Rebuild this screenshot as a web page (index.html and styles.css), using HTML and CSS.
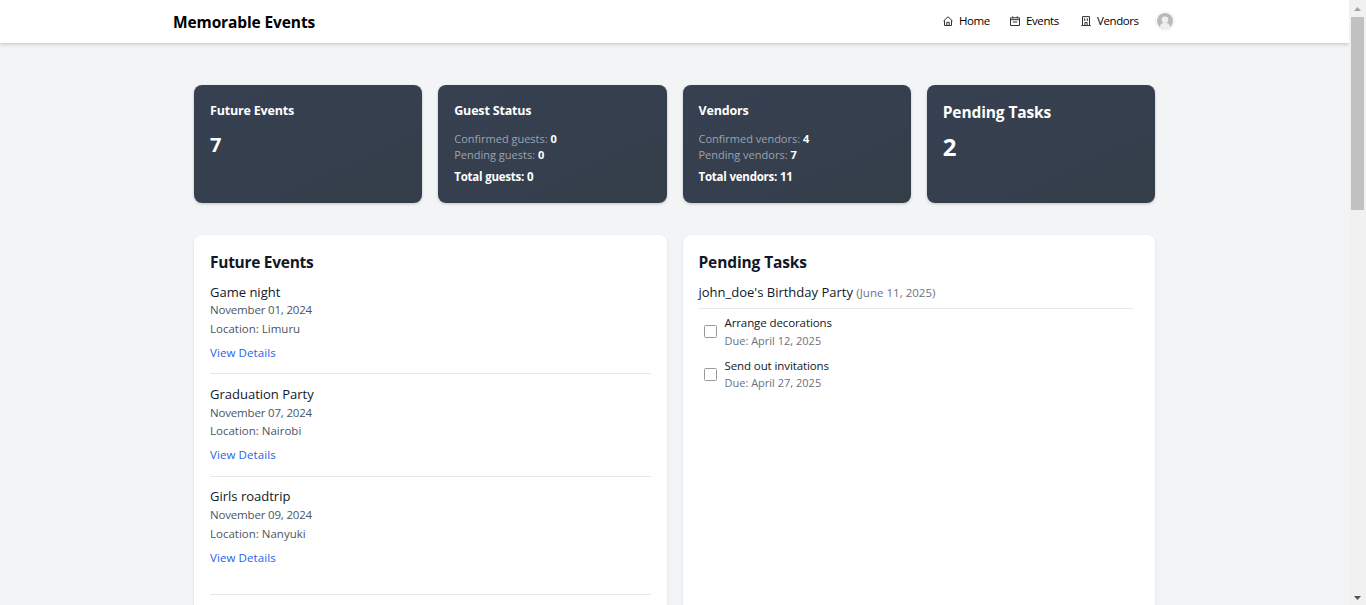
FILE: index.html
```html
<!DOCTYPE html>
<html lang="en">
<head>
<meta charset="utf-8">
<title>Memorable Events</title>
<link rel="stylesheet" href="styles.css">
</head>
<body>
<div class="page">
  <header class="navbar">
    <a class="brand">Memorable Events</a>
    <nav class="menu">
      <a class="link home"><svg class="icon" viewBox="0 0 10 10"><path d="M.5 5L5 .8 9.500 5M1.500 4.500v5h7v-5M3.800 9.500V6.300h2.400v3.200"/></svg><span>Home</span></a>
      <a class="link events"><svg class="icon" viewBox="0 0 10 10"><path d="M.5 1.800h9v7.700h-9zM.5 3.700h9M2.800.300v2M7.200.300v2M2.800 6h4.400"/></svg><span>Events</span></a>
      <a class="link vendors"><svg class="icon" viewBox="0 0 10 10"><path d="M1.500 9.500V.6h7v8.900M.3 9.500h9.400M3.900 9.500V6.500h2.200v3M3.700 2.300v2.700M6.300 2.300v2.700"/></svg><span>Vendors</span></a>
      <svg class="avatar" viewBox="0 0 20 20"><circle cx="10" cy="10" r="9.5" fill="#fff" stroke="#f0f0f0"/><circle cx="10" cy="10" r="8" fill="#b9b9b9"/><circle cx="10" cy="8.7" r="3.3" fill="#eee"/><path d="M4.8 16c.5-3 2.300-4.200 5.200-4.200s4.700 1.200 5.200 4.200a8 8 0 0 1-10.400 0z" fill="#eee"/></svg>
    </nav>
  </header>
  <main class="content">
    <section class="stats">
      <article class="stat"><h2>Future Events</h2><p class="number">7</p></article>
      <article class="stat"><h2>Guest Status</h2><div class="lines"><p>Confirmed guests: <b>0</b></p><p>Pending guests: <b>0</b></p></div><p class="total">Total guests: 0</p></article>
      <article class="stat"><h2>Vendors</h2><div class="lines"><p>Confirmed vendors: <b>4</b></p><p>Pending vendors: <b>7</b></p></div><p class="total">Total vendors: 11</p></article>
      <article class="stat large"><h2>Pending Tasks</h2><p class="number">2</p></article>
    </section>
    <section class="panels">
      <article class="panel future">
        <h2>Future Events</h2>
        <div class="event first"><h3>Game night</h3><p class="date">November 01, 2024</p><p class="place">Location: Limuru</p><a class="details">View Details</a></div>
        <div class="event"><h3>Graduation Party</h3><p class="date">November 07, 2024</p><p class="place">Location: Nairobi</p><a class="details">View Details</a></div>
        <div class="event last"><h3>Girls roadtrip</h3><p class="date">November 09, 2024</p><p class="place">Location: Nanyuki</p><a class="details">View Details</a></div>
      </article>
      <article class="panel pending">
        <h2>Pending Tasks</h2>
        <h3 class="group">john_doe's Birthday Party <span class="when">(June 11, 2025)</span></h3>
        <div class="task"><span class="check"></span><div><p class="name">Arrange decorations</p><p class="due">Due: April 12, 2025</p></div></div>
        <div class="task"><span class="check"></span><div><p class="name">Send out invitations</p><p class="due">Due: April 27, 2025</p></div></div>
      </article>
    </section>
  </main>
</div>
<aside class="scrollbar"><svg class="arrow" viewBox="0 0 17 17"><path d="M5 11l3.500-4 3.500 4z" fill="#a3a3a3"/></svg><div class="thumb"></div><svg class="arrow bottom" viewBox="0 0 17 17"><path d="M5 8l3.500 4 3.500-4z" fill="#505050"/></svg></aside>
</body>
</html>
```

FILE: styles.css
```css
* { box-sizing: border-box; }
html, body { height: 100%; }
body { margin: 0; display: flex; overflow: hidden; background: #f3f4f6; color: #111827; font: 11.5px/16px "Open Sans", "Noto Sans", sans-serif; }
h2, h3, p { margin: 0; font: inherit; }
.page { width: 1349px; height: 605px; overflow: hidden; }

.navbar { height: 43px; padding: 0 174px 0 173px; display: flex; justify-content: space-between; background: #fff; box-shadow: 0 1px 4px rgba(0,0,0,.22); color: #000; }
.brand { padding-top: 12px; font-size: 15.5px; line-height: 20px; font-weight: 700; letter-spacing: -.12px; }
.menu { display: flex; }
.link { display: flex; padding-top: 13px; letter-spacing: -.4px; }
.home { width: 67px; }
.events { width: 71px; }
.vendors { width: 74px; }
.icon { width: 10px; height: 10px; margin: 3px 6px 0 0; fill: none; stroke: #333; stroke-width: 1; }
.avatar { width: 20px; height: 20px; margin-top: 11px; }

.content { padding: 42px 194px 0; }
.stats { display: grid; grid-template-columns: repeat(4, 1fr); gap: 16px; }
.stat { height: 118px; padding: 17px 16px 16px; border-radius: 8px; background: linear-gradient(155deg, #364050 0%, #353f4e 50%, #343e49 100%); box-shadow: 0 1px 3px rgba(0,0,0,.2); color: #fff; }
.stat h2 { font-size: 12.5px; line-height: 18px; font-weight: 700; letter-spacing: -.18px; }
.stat .number { margin-top: 11px; font-size: 20px; line-height: 28px; font-weight: 700; }
.lines { margin-top: 11px; font-size: 11px; color: #9ca3af; }
.lines b { color: #fff; font-weight: 700; }
.total { margin-top: 6px; font-weight: 700; letter-spacing: -.22px; }
.stat.large { padding-top: 16px; }
.stat.large h2 { font-size: 15.5px; line-height: 22px; letter-spacing: -.12px; }
.stat.large .number { margin-top: 7px; font-size: 24px; line-height: 34px; }

.panels { margin-top: 32px; display: grid; grid-template-columns: 1fr 1fr; gap: 16px; }
.panel { height: 480px; padding: 16px 16px 0; border-radius: 8px; background: #fff; box-shadow: 0 1px 3px rgba(0,0,0,.1); }
.panel h2 { font-size: 15.5px; line-height: 22px; font-weight: 700; letter-spacing: -.12px; }
.panel.future h2 { letter-spacing: -.28px; }
.panel h3 { font-size: 13px; line-height: 18px; }
.event { height: 103px; padding-top: 11px; border-bottom: 1px solid #e5e7eb; color: #4b5563; }
.event h3 { color: #111827; }
.event.first { height: 101px; padding-top: 10px; }
.event.last { height: 118px; padding-top: 10px; }
.date { margin-top: 2px; letter-spacing: -.18px; }
.first .date { margin-top: 1px; }
.place { margin-top: 2px; }
.first .place, .last .place { margin-top: 3px; }
.details { display: block; margin-top: 8px; color: #2563eb; letter-spacing: .1px; }
.panel .group { margin: 10px 6px 0 0; height: 26px; border-bottom: 1px solid #e5e7eb; }
.when { font-size: 11.5px; color: #6b7280; letter-spacing: .02px; }
.task { display: flex; gap: 8px; padding: 6px 0 0 5px; height: 43px; }
.check { width: 13px; height: 13px; margin-top: 10px; border: 1px solid #999; border-radius: 1.500px; background: #fff; }
.name { letter-spacing: -.1px; }
.due { margin-top: 2px; font-size: 11px; color: #6b7280; }
.task:last-child .due { margin-top: 1px; }

.scrollbar { width: 17px; height: 605px; display: flex; flex-direction: column; align-items: center; background: #f1f1f1; }
.arrow { width: 17px; height: 17px; flex: none; }
.thumb { width: 13px; height: 193px; background: #c1c1c1; }
.bottom { margin-top: auto; }
```
